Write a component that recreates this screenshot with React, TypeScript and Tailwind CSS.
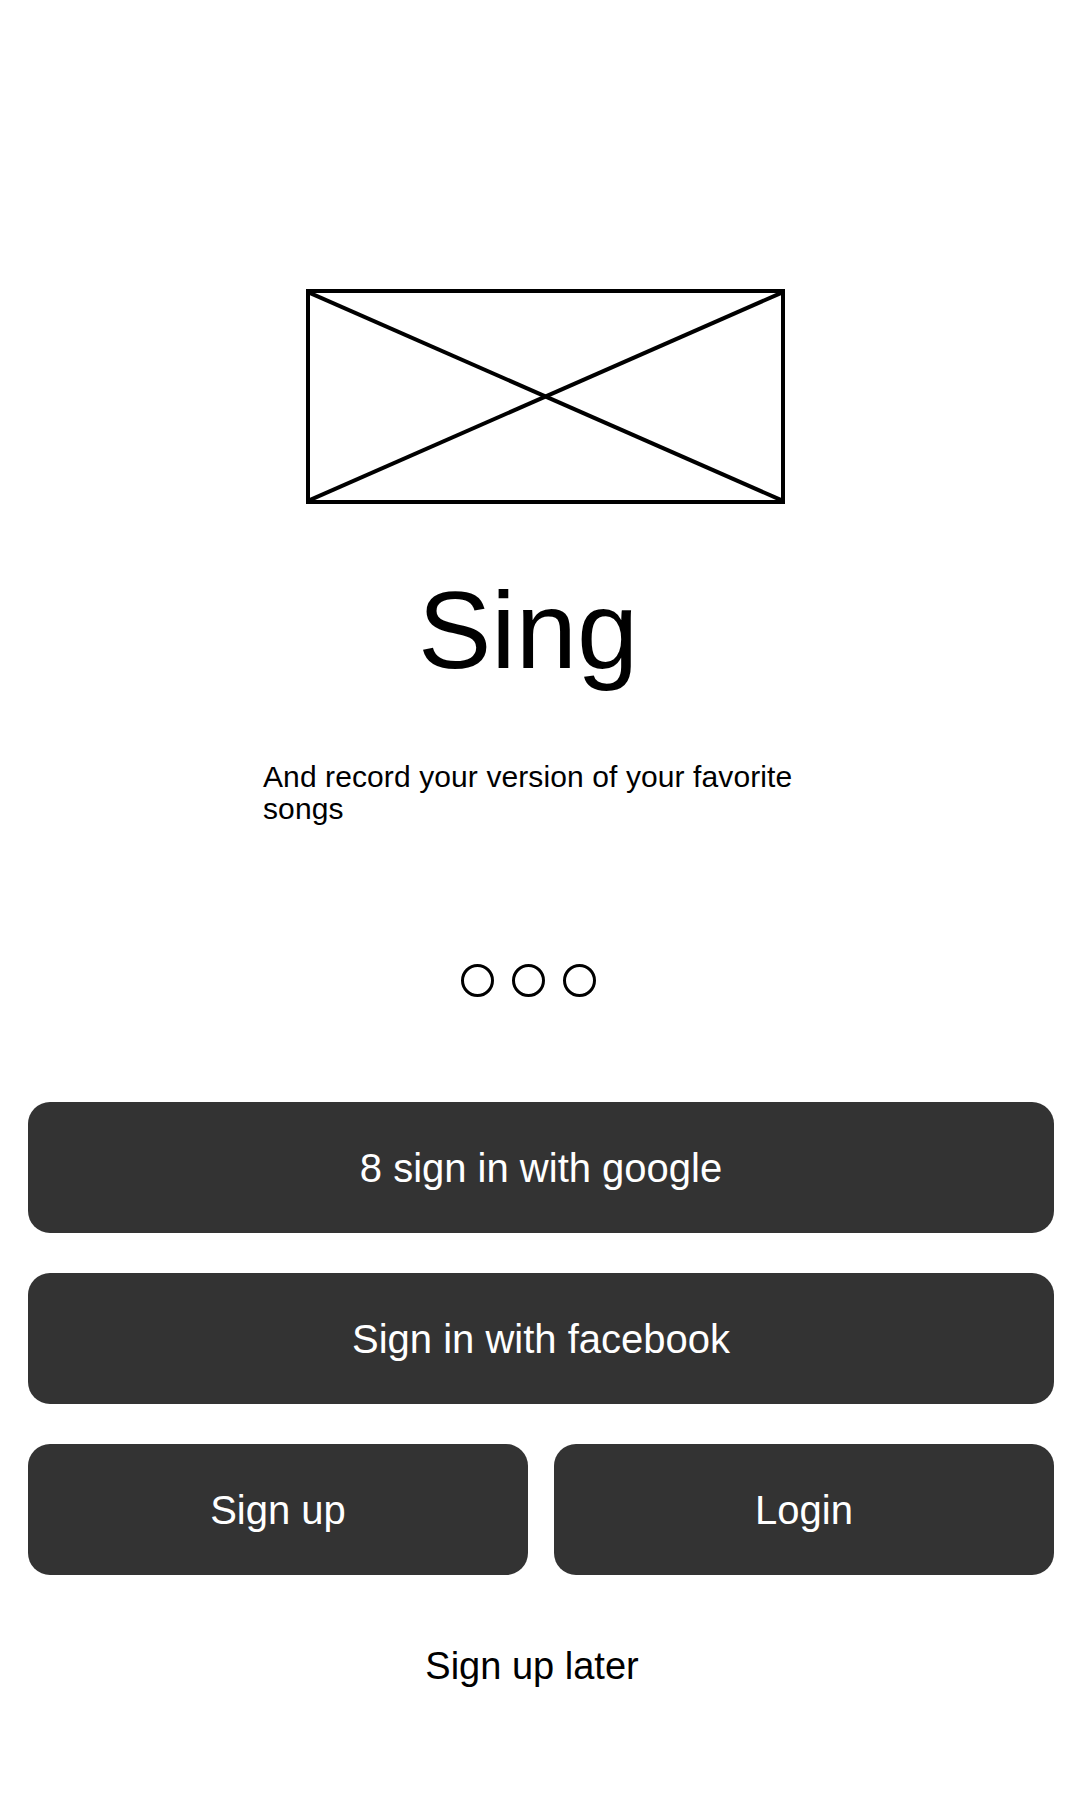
export default function App() {
  return (
    <div
      className="w-[1080px] h-[1800px] bg-white text-black flex flex-col"
      style={{ fontFamily: '"Liberation Sans", Arial, sans-serif' }}
    >
      {/* image placeholder */}
      <div className="mt-[289px] ml-[306px] w-[479px] h-[215px] border-[4px] border-black">
        <svg viewBox="0 0 471 207" preserveAspectRatio="none" className="w-full h-full block">
          <line x1="0" y1="0" x2="471" y2="207" stroke="black" strokeWidth="4" />
          <line x1="471" y1="0" x2="0" y2="207" stroke="black" strokeWidth="4" />
        </svg>
      </div>

      {/* title */}
      <div className="mt-[71px] flex justify-center pr-[24px]">
        <h1 className="text-[110px] leading-[110px] font-normal">Sing</h1>
      </div>

      {/* subtitle */}
      <p className="mt-[76px] ml-[263px] w-[560px] text-[30px] leading-[32px] tracking-[0.1px]">
        And record your version of your favorite songs
      </p>

      {/* pager dots */}
      <div className="mt-[139px] ml-[461px] flex gap-[18px]">
        <span className="w-[33px] h-[33px] rounded-full border-[3px] border-black" />
        <span className="w-[33px] h-[33px] rounded-full border-[3px] border-black" />
        <span className="w-[33px] h-[33px] rounded-full border-[3px] border-black" />
      </div>

      {/* buttons */}
      <div className="mt-[105px] ml-[28px] w-[1026px] flex flex-col gap-[40px]">
        <button className="h-[131px] rounded-[22px] bg-[#333333] text-white text-[40px] flex items-center justify-center">
          8 sign in with google
        </button>
        <button className="h-[131px] rounded-[22px] bg-[#333333] text-white text-[40px] flex items-center justify-center">
          Sign in with facebook
        </button>
        <div className="flex gap-[26px]">
          <button className="flex-1 h-[131px] rounded-[22px] bg-[#333333] text-white text-[40px] flex items-center justify-center">
            Sign up
          </button>
          <button className="flex-1 h-[131px] rounded-[22px] bg-[#333333] text-white text-[40px] flex items-center justify-center">
            Login
          </button>
        </div>
      </div>

      <div className="mt-[72px] flex justify-center pr-[16px]">
        <span className="text-[38px] leading-[38px]">Sign up later</span>
      </div>
    </div>
  );
}
